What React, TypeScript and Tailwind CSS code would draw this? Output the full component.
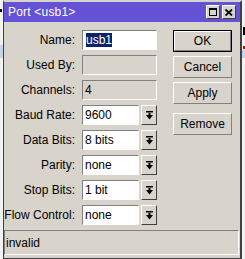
const font = "font-['Liberation_Sans',Arial,sans-serif]";

function DropIcon() {
  return (
    <svg width="7" height="9" viewBox="0 0 7 9" className="block">
      <rect x="0" y="0" width="7" height="1.5" fill="#000" />
      <rect x="2.5" y="2" width="2" height="3" fill="#000" />
      <polygon points="0,4 7,4 3.5,8.5" fill="#000" />
    </svg>
  );
}

function Field({ label, value, disabled, selected }: { label: string; value?: string; disabled?: boolean; selected?: boolean }) {
  return (
    <div className="flex items-center h-[20px]">
      <div className="w-[72px] text-right pr-[1px] text-[12px] text-black">{label}</div>
      <div
        className={`ml-[6px] w-[75px] h-[20px] flex items-center border border-t-[#808080] border-l-[#808080] border-b-white border-r-white ${
          disabled ? 'bg-[#d8d4cc]' : 'bg-white'
        }`}
      >
        {selected ? (
          <span className="ml-[3px] bg-[#0a246a] text-white text-[12px] leading-[14px] px-[0px]">{value}</span>
        ) : (
          <span className="ml-[2px] text-[12px] text-black">{value}</span>
        )}
      </div>
    </div>
  );
}

function Combo({ label, value }: { label: string; value: string }) {
  return (
    <div className="flex items-center h-[20px]">
      <div className="w-[72px] text-right pr-[1px] text-[12px] text-black whitespace-nowrap">{label}</div>
      <div className="ml-[6px] w-[57px] h-[20px] flex items-center bg-white border border-t-[#808080] border-l-[#808080] border-b-white border-r-white">
        <span className="ml-[2px] text-[12px] text-black">{value}</span>
      </div>
      <div className="ml-[2px] w-[16px] h-[20px] flex items-center justify-center bg-[#d8d4cc] border border-t-white border-l-white border-b-[#404040] border-r-[#404040]">
        <DropIcon />
      </div>
    </div>
  );
}

function Btn({ text, primary }: { text: string; primary?: boolean }) {
  return (
    <div className={`w-[59px] h-[22px] ${primary ? 'border border-black' : ''}`}>
      <div className="w-full h-full flex items-center justify-center bg-[#d8d4cc] border border-t-white border-l-white border-b-[#808080] border-r-[#808080] text-[12px] text-black">
        {text}
      </div>
    </div>
  );
}

export default function App() {
  return (
    <div className={`relative w-[245px] h-[259px] bg-[#f2f2f2] overflow-hidden ${font}`}>
      {/* bits of the list behind the window */}
      <div className="absolute left-0 top-[9px] w-[2px] h-[3px] bg-black" />
      <div className="absolute left-0 top-[45px] w-[3px] h-[13px] bg-[#c5d6ec]" />
      <div className="absolute right-0 top-[27px] w-[2px] h-[8px] bg-black" />
      <div className="absolute right-0 top-[46px] w-[2px] h-[3px] bg-[#e00000]" />
      <div className="absolute right-0 top-[50px] w-[3px] h-[8px] bg-[#c5d6ec]" />

      <div className="relative ml-[3px] w-[239px] h-[259px] flex flex-col bg-[#d8d4cc] border-t-2 border-t-[#d8d4cc] border-l border-l-[#404040] border-r-2 border-r-[#404040] border-b border-b-[#404040]">
        <div className="h-[20px] bg-[#6352d6] flex items-center pl-[4px] pr-[4px]">
          <span className="text-white text-[12px] tracking-[0.2px]">Port &lt;usb1&gt;</span>
          <div className="ml-auto flex gap-[2px]">
            <div className="w-[14px] h-[14px] bg-[#d8d4cc] border border-t-white border-l-white border-b-[#404040] border-r-[#404040] flex items-center justify-center">
              <div className="w-[8px] h-[8px] border border-black border-t-2" />
            </div>
            <div className="w-[14px] h-[14px] bg-[#d8d4cc] border border-t-white border-l-white border-b-[#404040] border-r-[#404040] flex items-center justify-center">
              <svg width="8" height="7" viewBox="0 0 8 7">
                <path d="M0.5 0.5 L7 6.5 M7 0.5 L0.5 6.5" stroke="#000" strokeWidth="1.8" />
              </svg>
            </div>
          </div>
        </div>

        <div className="flex pt-[8px]">
          <div className="flex flex-col gap-[5px]">
            <Field label="Name:" value="usb1" selected />
            <Field label="Used By:" disabled />
            <Field label="Channels:" value="4" disabled />
            <Combo label="Baud Rate:" value="9600" />
            <Combo label="Data Bits:" value="8 bits" />
            <Combo label="Parity:" value="none" />
            <Combo label="Stop Bits:" value="1 bit" />
            <Combo label="Flow Control:" value="none" />
          </div>
          <div className="ml-[16px] flex flex-col gap-[4px]">
            <Btn text="OK" primary />
            <Btn text="Cancel" />
            <Btn text="Apply" />
            <div className="mt-[5px]">
              <Btn text="Remove" />
            </div>
          </div>
        </div>

        <div className="mt-[5px] mr-[1px] h-[25px] flex items-center border border-t-[#808080] border-l-[#808080] border-b-white border-r-white">
          <span className="ml-[1px] text-[12px] text-black">invalid</span>
        </div>
      </div>
    </div>
  );
}
